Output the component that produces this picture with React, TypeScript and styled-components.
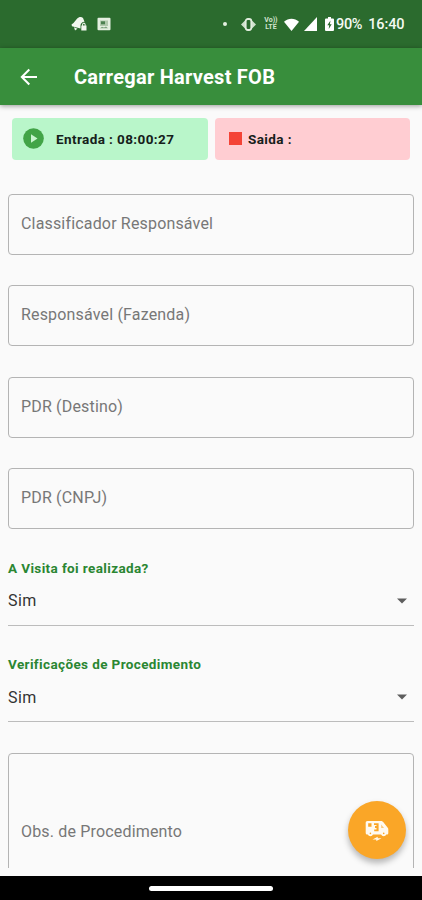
import React from 'react';
import styled, { createGlobalStyle } from 'styled-components';

const GlobalStyle = createGlobalStyle`
  * { box-sizing: border-box; }
  body { margin: 0; background: #fafafa; font-family: Roboto, "Liberation Sans", sans-serif; }
`;

const Screen = styled.div`
  position: relative;
  display: flex;
  flex-direction: column;
  width: 422px;
  height: 900px;
  overflow: hidden;
  background: #fafafa;
`;

const StatusBar = styled.div`
  flex: none;
  display: flex;
  align-items: center;
  justify-content: space-between;
  height: 48px;
  padding: 0 17.5px 0 71px;
  background: #2b6b2e;
  color: #f4faf2;
`;

const StatusGroup = styled.div<{ $gap: number }>`
  display: flex;
  align-items: center;
  gap: ${(p) => p.$gap}px;
`;

const StatusText = styled.span<{ $left: number; $spacing: number }>`
  margin: 1px 0 0 ${(p) => p.$left}px;
  font-size: 14.5px;
  line-height: 18px;
  letter-spacing: ${(p) => p.$spacing}px;
  white-space: nowrap;
  font-weight: 500;
`;

const NetworkLabel = styled.span`
  width: 14px;
  margin: 0 6px 0 8px;
  font-size: 7px;
  line-height: 7px;
  font-weight: 700;
  text-align: center;
  color: #d3e4d0;
`;

const AppBar = styled.header`
  flex: none;
  display: flex;
  align-items: center;
  gap: 35px;
  height: 57px;
  padding: 0 19px;
  background: #388e3c;
  color: #fff;
  box-shadow: 0 1px 5px rgba(0, 0, 0, 0.4);
  z-index: 1;
`;

const Title = styled.h1`
  margin: 1px 0 0;
  font-size: 20px;
  line-height: 24px;
  font-weight: 700;
  letter-spacing: 0.25px;
  white-space: nowrap;
`;

const Form = styled.main`
  flex: none;
  height: 763px;
  padding: 13px 8px 0;
  overflow: hidden;
`;

const Times = styled.div`
  display: grid;
  grid-template-columns: 196px 195px;
  gap: 7px;
  padding-left: 4px;
  margin-bottom: 34px;
`;

const TimeChip = styled.div<{ $color: string; $pad: number; $gap: number }>`
  display: flex;
  align-items: center;
  gap: ${(p) => p.$gap}px;
  height: 42px;
  padding: 0 0 1px ${(p) => p.$pad}px;
  border-radius: 4px;
  background: ${(p) => p.$color};
  color: #15201a;
  font-size: 13.5px;
  font-weight: 700;
  letter-spacing: 0.4px;
  white-space: nowrap;
`;

const StopSquare = styled.span`
  width: 13px;
  height: 13px;
  background: #f44336;
`;

const Field = styled.div<{ $tall?: boolean }>`
  display: flex;
  align-items: center;
  height: ${(p) => (p.$tall ? '159px' : '61px')};
  padding: ${(p) => (p.$tall ? '0 12px' : '0 12px 1px')};
  margin-bottom: 30.4px;
  border: 1px solid #b4b4b4;
  border-radius: 4px;
`;

const FieldLabel = styled.span`
  color: #777;
  font-size: 16px;
  line-height: 20px;
  letter-spacing: 0.17px;
  white-space: nowrap;
`;

const SelectList = styled.div`
  display: flex;
  flex-direction: column;
  gap: 30px;
  margin: -1px 0 31.4px;
`;

const SelectBlock = styled.section`
  height: 66.5px;
`;

const SelectTitle = styled.div`
  height: 18px;
  color: #2a8632;
  font-size: 13.5px;
  line-height: 18px;
  font-weight: 700;
  letter-spacing: 0.38px;
`;

const SelectRow = styled.div`
  display: flex;
  align-items: center;
  justify-content: space-between;
  height: 49px;
  padding: 0 7px 0 0;
  border-bottom: 1px solid #bcbcbc;
  color: #333;
  font-size: 16px;
  letter-spacing: 0.4px;
`;

const NavBar = styled.footer`
  flex: none;
  display: flex;
  justify-content: center;
  height: 24px;
  margin-top: 8px;
  padding-top: 10px;
  background: #000;
`;

const HomePill = styled.div`
  width: 124px;
  height: 5px;
  border-radius: 3px;
  background: #fff;
`;

const Fab = styled.button`
  position: absolute;
  right: 16px;
  bottom: 41px;
  display: flex;
  align-items: center;
  justify-content: center;
  width: 58px;
  height: 58px;
  padding: 2px 0 0;
  border: 0;
  border-radius: 50%;
  background: #faa627;
  box-shadow: 0 4px 6px rgba(0, 0, 0, 0.28);
`;

const MutedLockIcon = () => (
  <svg width="17" height="16" viewBox="0 0 17 16" fill="#f2f7ef">
    <path d="M.5 8.500 2.500 7 6 2.800C8 .5 10.500.5 12 2l1.500 3.800c-2.400.1-4 1.700-4 3.700v3L1 10.300z" />
    <path d="m3 11.300 3.500 1.500L4 14.400z" />
    <path d="M10.300 9.500h.8V8.600c0-2.500 3.500-2.500 3.500 0v.9h.9v5h-5.200zm1.700 0h1.700v-.8c0-1.200-1.700-1.200-1.700 0z" fillRule="evenodd" />
  </svg>
);

const PictureIcon = () => (
  <svg width="14" height="14" viewBox="0 0 14 14">
    <rect x=".5" y=".8" width="13" height="12.400" rx="1" fill="#e5efe1" />
    <path d="M3 3.500h8v5.500H3z" fill="#b1c9ad" />
    <path d="M4 4.300h4v3H4z" fill="#4c8050" />
    <path d="M3 11.300 5 9.700l2 .8 2-.9 2 1.700z" fill="#7da37e" />
  </svg>
);

const VibrateIcon = () => (
  <svg width="15" height="13" viewBox="0 0 15 13">
    <path d="M4.500 2v9L0 6.500zM10.500 2v9L15 6.500z" fill="#cfe1cc" />
    <rect x="4.700" y="1" width="5.600" height="11" rx="2.200" fill="#2b6b2e" stroke="#e2eedf" strokeWidth="1.800" />
  </svg>
);

const WifiIcon = () => (
  <svg width="15" height="13" viewBox="0 0 15 13" fill="#fff">
    <path d="M0 3.700C4.300-.3 10.700-.3 15 3.700L7.500 13z" />
  </svg>
);

const SignalIcon = () => (
  <svg width="13" height="14" viewBox="0 0 13 14" fill="#fff">
    <path d="M13 0v14H0z" />
  </svg>
);

const BatteryIcon = () => (
  <svg width="9" height="14" viewBox="0 0 9 14">
    <path d="M3 0h3v1.500h2q1 0 1 1V13q0 1-1 1H1q-1 0-1-1V2.500q0-1 1-1h2z" fill="#fff" />
    <path d="M5.500 3.500 2.300 8.300h1.900L3.700 12l3-4.800H4.900z" fill="#2b6b2e" />
  </svg>
);

const BackIcon = () => (
  <svg width="20" height="20" viewBox="0 0 20 20" fill="none" stroke="#fff" strokeWidth="2">
    <path d="M18 10H3M10.300 2.500 2.800 10l7.500 7.500" />
  </svg>
);

const PlayIcon = () => (
  <svg width="21" height="21" viewBox="0 0 21 21">
    <circle cx="10.500" cy="10.500" r="10.300" fill="#42a447" />
    <path d="m8 6.200 6.500 4.300L8 14.800z" fill="#c9f5cf" />
  </svg>
);

const CaretIcon = () => (
  <svg width="10" height="6" viewBox="0 0 10 6">
    <path d="M0 .5h10L5 5.500z" fill="#5d5d5d" />
  </svg>
);

const ElectricVanIcon = () => (
  <svg width="24" height="22" viewBox="0 0 24 22">
    <path
      d="M2.500 1H16c1 0 1.600.4 2.200 1.100l4.500 5.600c.5.600.6 1 .6 1.700V13c0 1-.6 1.500-1.500 1.500h-.5a2.800 2.800 0 0 1-5.200 0H8a2.800 2.800 0 0 1-5.200 0C1.300 14.500.7 14 .7 12.700V2.900C.7 1.700 1.300 1 2.500 1z"
      fill="#fffaf0"
    />
    <path d="M3.200 3.300h3.300v3.500H3.200zM9 3.300h4.600v8H9.200V9.500h2.300V8H10V6h1.500V5H9z" fill="#faa627" />
    <path d="M16.200 4.500 19 8h-2.800z" fill="#faa627" opacity=".6" />
    <circle cx="5.400" cy="13.400" r=".8" fill="#faa627" />
    <circle cx="18.700" cy="13.400" r=".8" fill="#faa627" />
    <path d="m7.500 19.500 5.200-2.800v1.500h3.800l-5.200 2.900v-1.600z" fill="#fffaf0" />
  </svg>
);

const Dot = styled.span`
  width: 4px;
  height: 4px;
  margin-right: 14px;
  border-radius: 50%;
  background: #e4f0e1;
`;

const SignalSlot = styled.span`
  display: flex;
  margin: 0 8px 0 5px;
`;

const fields = [
  'Classificador Responsável',
  'Responsável (Fazenda)',
  'PDR (Destino)',
  'PDR (CNPJ)',
];

const selects = [
  { title: 'A Visita foi realizada?', value: 'Sim' },
  { title: 'Verificações de Procedimento', value: 'Sim' },
];

export default function App() {
  return (
    <>
      <GlobalStyle />
      <Screen>
        <StatusBar>
          <StatusGroup $gap={9}>
            <MutedLockIcon />
            <PictureIcon />
          </StatusGroup>
          <StatusGroup $gap={0}>
            <Dot />
            <VibrateIcon />
            <NetworkLabel>Vo))<br />LTE</NetworkLabel>
            <WifiIcon />
            <SignalSlot><SignalIcon /></SignalSlot>
            <BatteryIcon />
            <StatusText $left={2} $spacing={-0.3}>90%</StatusText>
            <StatusText $left={6} $spacing={-0.1}>16:40</StatusText>
          </StatusGroup>
        </StatusBar>
        <AppBar>
          <BackIcon />
          <Title>Carregar Harvest FOB</Title>
        </AppBar>
        <Form>
          <Times>
            <TimeChip $color="#b9f6ca" $pad={11} $gap={12}>
              <PlayIcon />
              <span>Entrada : 08:00:27</span>
            </TimeChip>
            <TimeChip $color="#ffcdd2" $pad={14} $gap={6}>
              <StopSquare />
              <span>Saida :</span>
            </TimeChip>
          </Times>
          {fields.map((label) => (
            <Field key={label}>
              <FieldLabel>{label}</FieldLabel>
            </Field>
          ))}
          <SelectList>
            {selects.map((s) => (
              <SelectBlock key={s.title}>
                <SelectTitle>{s.title}</SelectTitle>
                <SelectRow>
                  {s.value}
                  <CaretIcon />
                </SelectRow>
              </SelectBlock>
            ))}
          </SelectList>
          <Field $tall>
            <FieldLabel>Obs. de Procedimento</FieldLabel>
          </Field>
        </Form>
        <NavBar>
          <HomePill />
        </NavBar>
        <Fab aria-label="Transporte">
          <ElectricVanIcon />
        </Fab>
      </Screen>
    </>
  );
}
